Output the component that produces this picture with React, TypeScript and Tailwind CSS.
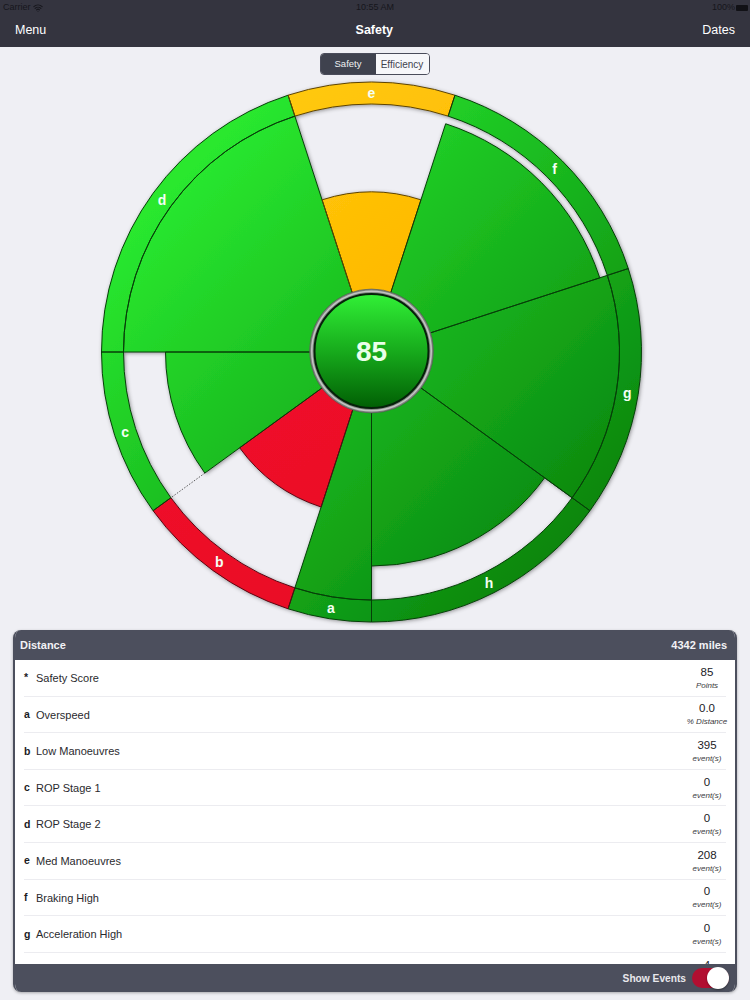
import React from "react";
import { Wifi } from "lucide-react";

const CX = 371.5;
const CY = 352;
const pt = (r: number, a: number): [number, number] => {
  const t = (a * Math.PI) / 180;
  return [CX + r * Math.sin(t), CY - r * Math.cos(t)];
};
const f = (n: number) => n.toFixed(2);
const sector = (r0: number, r1: number, a0: number, a1: number) => {
  const [x0, y0] = pt(r1, a0);
  const [x1, y1] = pt(r1, a1);
  const [x2, y2] = pt(r0, a1);
  const [x3, y3] = pt(r0, a0);
  const large = a1 - a0 > 180 ? 1 : 0;
  return `M${f(x0)} ${f(y0)}A${r1} ${r1} 0 ${large} 1 ${f(x1)} ${f(y1)}L${f(x2)} ${f(y2)}A${r0} ${r0} 0 ${large} 0 ${f(x3)} ${f(y3)}Z`;
};

type Seg = { id: string; a0: number; a1: number; r: number; color: "g" | "r" | "y" };
const segs: Seg[] = [
  { id: "a", a0: 180, a1: 198, r: 248, color: "g" },
  { id: "b", a0: 198, a1: 234, r: 163, color: "r" },
  { id: "c", a0: 234, a1: 270, r: 206, color: "g" },
  { id: "d", a0: 270, a1: 342, r: 248, color: "g" },
  { id: "e", a0: 342, a1: 378, r: 160, color: "y" },
  { id: "f", a0: 18, a1: 72, r: 240, color: "g" },
  { id: "g", a0: 72, a1: 126, r: 248, color: "g" },
  { id: "h", a0: 126, a1: 180, r: 214, color: "g" },
];
const fill = { g: "url(#green)", r: "url(#red)", y: "url(#amber)" };
const stroke = { g: "#063f08", r: "#5a0612", y: "#5e4300" };

const rows = [
  ["*", "Safety Score", "85", "Points"],
  ["a", "Overspeed", "0.0", "% Distance"],
  ["b", "Low Manoeuvres", "395", "event(s)"],
  ["c", "ROP Stage 1", "0", "event(s)"],
  ["d", "ROP Stage 2", "0", "event(s)"],
  ["e", "Med Manoeuvres", "208", "event(s)"],
  ["f", "Braking High", "0", "event(s)"],
  ["g", "Acceleration High", "0", "event(s)"],
  ["", "", "4", "\u00a0"],
];

function Radial({ r0, r1, a, color, dash }: { r0: number; r1: number; a: number; color: string; dash?: string }) {
  const [x0, y0] = pt(r0, a);
  const [x1, y1] = pt(r1, a);
  return <line x1={x0} y1={y0} x2={x1} y2={y1} stroke={color} strokeWidth={dash ? 0.8 : 1} strokeDasharray={dash} />;
}

function Chart() {
  return (
    <svg width="750" height="556" viewBox="0 74 750 556" className="block shrink-0">
      <defs>
        <linearGradient id="green" gradientUnits="userSpaceOnUse" x1="190" y1="170" x2="560" y2="540">
          <stop offset="0" stopColor="#29e82f" />
          <stop offset="1" stopColor="#0a870e" />
        </linearGradient>
        <linearGradient id="red" gradientUnits="userSpaceOnUse" x1="190" y1="400" x2="320" y2="600">
          <stop offset="0" stopColor="#f0102a" />
          <stop offset="1" stopColor="#ea0e26" />
        </linearGradient>
        <linearGradient id="amber" gradientUnits="userSpaceOnUse" x1="290" y1="90" x2="450" y2="290">
          <stop offset="0" stopColor="#ffc90c" />
          <stop offset="1" stopColor="#ffb700" />
        </linearGradient>
        <linearGradient id="hub" x1="0" y1="0" x2="0" y2="1">
          <stop offset="0" stopColor="#31f036" />
          <stop offset="0.5" stopColor="#17ab1c" />
          <stop offset="1" stopColor="#015f04" />
        </linearGradient>
        <filter id="soft" x="-10%" y="-10%" width="120%" height="120%">
          <feDropShadow dx="1" dy="1" stdDeviation="2" floodColor="#000" floodOpacity="0.45" />
        </filter>
      </defs>

      <g filter="url(#soft)">
        {segs.map((s) => (
          <path key={`o${s.id}`} d={sector(248, 270, s.a0, s.a1)} fill={fill[s.color]} />
        ))}
        {segs.map((s) => (
          <path key={`i${s.id}`} d={sector(50, s.r, s.a0, s.a1)} fill={fill[s.color]} />
        ))}
      </g>

      {segs.map((s) => (
        <path key={`os${s.id}`} d={sector(248, 270, s.a0, s.a1)} fill="none" stroke={stroke[s.color]} strokeWidth="1" />
      ))}
      {segs.map((s) => (
        <path key={`is${s.id}`} d={sector(50, s.r, s.a0, s.a1)} fill="none" stroke={stroke[s.color]} strokeWidth="1" />
      ))}

      <Radial r0={206} r1={248} a={234} color="#333" dash="1.5 1.5" />
      <Radial r0={214} r1={248} a={126} color="#063f08" />
      <Radial r0={214} r1={248} a={180} color="#063f08" />

      {segs.map((s) => {
        const [x, y] = pt(259, (s.a0 + s.a1) / 2);
        return (
          <text
            key={`t${s.id}`}
            x={x}
            y={y + 5}
            textAnchor="middle"
            fill="#f4fff4"
            fontSize="14"
            fontWeight="700"
            fontFamily="'Liberation Sans', sans-serif"
          >
            {s.id}
          </text>
        );
      })}

      <circle cx="371.5" cy="351" r="62" fill="#7f837f" stroke="#4a4f4a" strokeWidth="0.5" />
      <circle cx="371.5" cy="351" r="60.5" fill="#c2c6c2" />
      <circle cx="371.5" cy="351" r="59" fill="#858985" />
      <circle cx="371.5" cy="351" r="57" fill="url(#hub)" stroke="#06210a" strokeWidth="2" />
      <text
        x="371.5"
        y="361"
        textAnchor="middle"
        fill="#e9ffe9"
        fontSize="28"
        fontWeight="700"
        fontFamily="'Liberation Sans', sans-serif"
      >
        85
      </text>
    </svg>
  );
}

export default function App() {
  return (
    <div className="flex h-[1000px] w-[750px] flex-col overflow-hidden bg-[#efeff4] font-['Liberation_Sans',sans-serif]">
      <header className="relative h-[47px] shrink-0 bg-[#34343f]">
        <div className="flex h-[15px] items-center justify-between pl-[3px] pr-[2px] pt-[1px] text-[9px] text-[#16161c]">
          <div className="flex items-center gap-[2px]">
            <span>Carrier</span>
            <Wifi size={10} strokeWidth={2.5} />
          </div>
          <span className="absolute left-1/2 -translate-x-1/2">10:55 AM</span>
          <div className="flex items-center gap-[1px]">
            <span>100%</span>
            <span className="block h-[6px] w-[12px] rounded-[1px] bg-[#111116]" />
          </div>
        </div>
        <div className="flex h-[32px] items-center justify-between px-[15px] pb-[1px] text-[12.5px] text-white">
          <span>Menu</span>
          <span className="font-bold">Safety</span>
          <span>Dates</span>
        </div>
      </header>

      <div className="flex shrink-0 justify-center pt-[6px]">
        <div className="ml-[-1px] flex h-[22px] w-[110px] overflow-hidden rounded-[4px] border border-[#4a4c5a] text-[9.5px]">
          <div className="flex w-[55px] items-center justify-center bg-[#3f424e] text-[#eef0f2]">Safety</div>
          <div className="flex flex-1 items-center justify-center bg-[#f7f7fa] text-[10px] text-[#3f424e]">Efficiency</div>
        </div>
      </div>

      <div className="-mt-px">
        <Chart />
      </div>

      <section className="mx-[13px] flex h-[362px] flex-col overflow-hidden rounded-[8px] border-x-2 border-[#4c4f5d] bg-white shadow-[0_1px_3px_rgba(0,0,0,0.3)]">
        <div className="flex h-[30px] shrink-0 items-center justify-between bg-[#4c4f5d] pl-[5px] pr-[8px] text-[11px] font-bold text-[#f2f2f5]">
          <span>Distance</span>
          <span>4342 miles</span>
        </div>
        <div className="min-h-0 flex-1 overflow-hidden px-[9px]">
          {rows.map(([k, name, val, unit], i) => (
            <div key={i} className="flex h-[36.6px] items-center border-b border-[#ececf0] text-[#1b1b1f]">
              <span className="w-[12px] pt-px text-[10.5px] font-bold">{k}</span>
              <span className="flex-1 pt-px text-[11px] text-[#2a2a2e]">{name}</span>
              <div className="flex w-[38px] flex-col items-center">
                <span className="text-[11.5px] leading-[15px]">{val}</span>
                <span className="whitespace-nowrap text-[8px] italic leading-[11px] text-[#3a3a3e]">{unit}</span>
              </div>
            </div>
          ))}
        </div>
        <div className="flex h-[28px] shrink-0 items-center justify-end gap-[6px] bg-[#4c4f5d] pr-[6px]">
          <span className="pt-px text-[10.2px] font-bold text-[#e8e8ec]">Show Events</span>
          <div className="relative h-[20px] w-[37px] rounded-full bg-[#b20f31]">
            <div className="absolute right-0 top-[-1px] h-[22px] w-[22px] rounded-full bg-white shadow-[0_1px_2px_rgba(0,0,0,0.4)]" />
          </div>
        </div>
      </section>
    </div>
  );
}
